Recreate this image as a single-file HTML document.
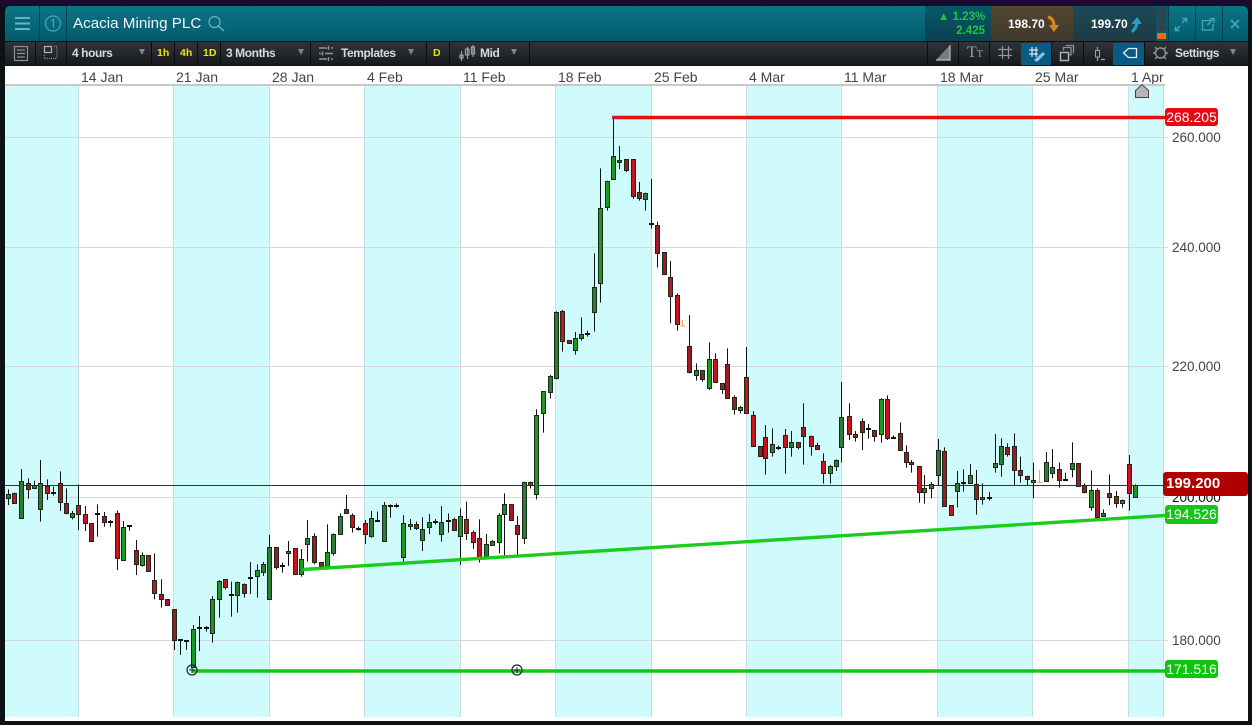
<!DOCTYPE html>
<html><head><meta charset="utf-8"><style>
*{box-sizing:border-box}
html,body{margin:0;padding:0;width:1252px;height:725px;overflow:hidden;background:#0d1216;font-family:"Liberation Sans",sans-serif}
.a{position:absolute}
#top{left:0;top:0;width:1252px;height:6px;background:#1c0a30}
#hdr{left:5px;top:6px;width:1243px;height:35px;background:linear-gradient(#0b7587,#045a6c);border-radius:5px 5px 0 0}
#tb{left:5px;top:42px;width:1243px;height:23px;background:linear-gradient(#30343a,#181a1e)}
.dv{position:absolute;width:1px;background:#0b0d10}
.hd{position:absolute;width:1px;top:6px;height:35px;background:#04414f}
.t{position:absolute;white-space:nowrap;color:#d5dade;font-weight:bold;font-size:12px;line-height:14px;letter-spacing:-.42px}
.y{position:absolute;white-space:nowrap;color:#e8e800;font-weight:bold;font-size:10.5px;line-height:12px}
.ar{position:absolute;width:0;height:0;border-left:3.5px solid transparent;border-right:3.5px solid transparent;border-top:6px solid #7f858b}
.dt{position:absolute;white-space:nowrap;color:#444;font-size:14px;line-height:14px;top:70px}
.pr{position:absolute;white-space:nowrap;color:#444;font-size:13.5px;line-height:16px;left:1172px}
.lb{position:absolute;left:1165px;width:53px;color:#fff;font-size:14px;line-height:18px;border-radius:3px;text-align:center}
</style></head><body>
<div class="a" id="top"></div>
<div class="a" style="left:5px;top:66px;width:1243px;height:655px;background:#fff"></div>
<div class="a" id="hdr"></div>
<div class="a" style="left:925px;top:6px;width:66px;height:35px;background:linear-gradient(#05586a,#0c4150)"></div>
<div class="a" style="left:991px;top:6px;width:82px;height:35px;background:linear-gradient(#54452f,#3f3a2e)"></div>
<div class="a" style="left:1073px;top:6px;width:83px;height:35px;background:linear-gradient(#1a4a58,#1f3a44)"></div>
<div class="a" style="left:1156px;top:6px;width:12px;height:35px;background:#0a5868"></div>
<div class="a" style="left:1157px;top:8px;width:9px;height:7px;background:#36414a"></div>
<div class="a" style="left:1157px;top:17px;width:9px;height:7px;background:#36414a"></div>
<div class="a" style="left:1157px;top:25px;width:9px;height:6px;background:#36414a"></div>
<div class="a" style="left:1157px;top:33px;width:9px;height:6px;background:#ee6a10"></div>
<div class="hd" style="left:39px"></div><div class="hd" style="left:66px"></div>
<div class="hd" style="left:1168px"></div><div class="hd" style="left:1195px"></div><div class="hd" style="left:1222px"></div>
<div class="t" style="left:73px;top:15px;font-size:15.2px;line-height:18px;font-weight:normal;color:#f2f6f7;letter-spacing:0">Acacia Mining PLC</div>
<div class="t" style="left:938px;top:10px;width:47px;text-align:right;color:#1ac83a;font-size:11.5px;letter-spacing:0">▲ 1.23%</div>
<div class="t" style="left:938px;top:23.5px;width:47px;text-align:right;color:#1ac83a;font-size:11.5px;letter-spacing:0">2.425</div>
<div class="t" style="left:1008px;top:17px;color:#fff;letter-spacing:0">198.70</div>
<div class="t" style="left:1091px;top:17px;color:#fff;letter-spacing:0">199.70</div>
<div class="a" id="tb"></div>
<div class="dv" style="left:35px;top:42px;height:23px"></div><div class="dv" style="left:66px;top:42px;height:23px"></div>
<div class="dv" style="left:151px;top:42px;height:23px"></div><div class="dv" style="left:174px;top:42px;height:23px"></div><div class="dv" style="left:197px;top:42px;height:23px"></div><div class="dv" style="left:220px;top:42px;height:23px"></div>
<div class="dv" style="left:310px;top:42px;height:23px"></div><div class="dv" style="left:426px;top:42px;height:23px"></div><div class="dv" style="left:449px;top:42px;height:23px"></div><div class="dv" style="left:529px;top:42px;height:23px"></div>
<div class="dv" style="left:927px;top:42px;height:23px"></div><div class="dv" style="left:958px;top:42px;height:23px"></div><div class="dv" style="left:989px;top:42px;height:23px"></div><div class="dv" style="left:1021px;top:42px;height:23px"></div><div class="dv" style="left:1051px;top:42px;height:23px"></div><div class="dv" style="left:1083px;top:42px;height:23px"></div><div class="dv" style="left:1113px;top:42px;height:23px"></div><div class="dv" style="left:1144px;top:42px;height:23px"></div>
<div class="a" style="left:1021px;top:43px;width:30px;height:22px;background:#0a5a86"></div>
<div class="a" style="left:1113px;top:43px;width:31px;height:22px;background:#0a5a86"></div>
<div class="t" style="left:72px;top:46px">4 hours</div><div class="ar" style="left:139px;top:49px"></div>
<div class="y" style="left:157px;top:47px">1h</div><div class="y" style="left:180px;top:47px">4h</div><div class="y" style="left:203px;top:47px">1D</div>
<div class="t" style="left:226px;top:46px">3 Months</div><div class="ar" style="left:298px;top:49px"></div>
<div class="t" style="left:341px;top:46px">Templates</div><div class="ar" style="left:408px;top:49px"></div>
<div class="y" style="left:433px;top:47px">D</div>
<div class="t" style="left:480px;top:46px">Mid</div><div class="ar" style="left:511px;top:49px"></div>
<div class="t" style="left:967px;top:45px;font-family:'Liberation Serif',serif;font-weight:normal;font-size:16px;line-height:16px;color:#9a9ea2;letter-spacing:0">T<span style="font-size:10px">T</span></div>
<div class="t" style="left:1175px;top:46px">Settings</div><div class="ar" style="left:1230px;top:49px"></div>
<div class="dt" style="left:81px">14 Jan</div><div class="dt" style="left:176px">21 Jan</div><div class="dt" style="left:272px">28 Jan</div><div class="dt" style="left:367px">4 Feb</div><div class="dt" style="left:463px">11 Feb</div><div class="dt" style="left:558px">18 Feb</div><div class="dt" style="left:654px">25 Feb</div><div class="dt" style="left:749px">4 Mar</div><div class="dt" style="left:844px">11 Mar</div><div class="dt" style="left:940px">18 Mar</div><div class="dt" style="left:1035px">25 Mar</div><div class="dt" style="left:1131px;width:33px;overflow:hidden">1 Apr</div>
<svg class="a" id="ch" style="left:0;top:0" width="1252" height="725" viewBox="0 0 1252 725">
<g id="bg"></g><g id="cs"></g>
<g fill="none" stroke-width="1.2">
<path d="M15 18h15M15 23.500h15M15 29h15" stroke="#5fb8c4" stroke-width="2"/>
<circle cx="53" cy="23.500" r="7.500" stroke="#4aa5b3"/><path d="M51.500 20.500l2-1.200v8.500" stroke="#4aa5b3"/>
<circle cx="214.500" cy="22" r="5.500" stroke="#5fb8c4"/><path d="M218.500 26l5.500 5" stroke="#5fb8c4" stroke-width="1.500"/>
<path d="M1175.500 30.500l4.500-4.500M1175.500 26.500v4h4M1186.500 18.500l-4.500 4.500M1182.500 18.500h4v4" stroke="#3fa6b6" stroke-width="1.500"/>
<path d="M1211 20.500h-8.500v9.500h10.500v-6M1207.500 25l6-6.500M1209.500 18.500h4.500v4.500" stroke="#4aa5b3" stroke-width="1.300"/>
<path d="M1231 20l8 8M1239 20l-8 8" stroke="#4aa5b3" stroke-width="1.600"/>
<rect x="14.500" y="46.500" width="13" height="14" stroke="#8b9096"/><path d="M17 50h8M17 53.500h8M17 57h8" stroke="#8b9096"/>
<rect x="44.500" y="46.500" width="7" height="6" stroke="#b0b5ba"/><path d="M44.500 55v3.500h12.500V47M54 46.500h3" stroke="#8b9096" stroke-dasharray="1 1"/>
<path d="M319 48h8M331 48h2M319 53.500h2M325 53.500h8M319 59h8M331 59h2M328.500 46v4M322.500 51.500v4M328.500 57v4" stroke="#8f949a" stroke-width="1.400"/>
<path d="M461.500 51v10M467.500 47v12M473 45v12" stroke="#9a9fa4"/><rect x="460" y="55" width="3" height="3" stroke="#9a9fa4"/><rect x="465.500" y="49" width="3.500" height="6" stroke="#9a9fa4"/><rect x="471.500" y="47" width="3" height="7" stroke="#9a9fa4"/>
<path d="M936 60h14V45z" fill="#777c82" stroke="none"/><path d="M950 45v15h-14" stroke="#b8bcc0"/>
<path d="M998 49.500h14M998 55.500h14M1002.500 46v13M1008.500 46v13" stroke="#8f9498"/>
<path d="M1029 50h9M1029 54h9M1032 47v10M1036 47v10" stroke="#dbe6ee"/><path d="M1034 60l9-8 2 2-8 8z" fill="#8cc6e6" stroke="none"/>
<rect x="1060.500" y="52.500" width="8" height="8" stroke="#aeb2b6" stroke-width="1.500"/><path d="M1063.500 50.500v-3h7.500v7.500h-1.500M1066.500 46v-.500h7v8" stroke="#8a8f94" stroke-width="1.300"/>
<path d="M1097.500 47v3M1097.500 57v4M1101 59.500h4" stroke="#9ca1a6"/><rect x="1095.500" y="50.500" width="4" height="6.500" stroke="#9ca1a6" stroke-width="1"/>
<path d="M1123.500 53l5-4.500h8v9h-8z" stroke="#e6eef3" stroke-width="1.300"/>
<circle cx="1160.500" cy="53" r="5" stroke="#8b9096" stroke-width="1.500"/><path d="M1155 47l2 2M1166 47l-2 2M1155 59l2-2M1166 59l-2-2M1153 53h2M1166 53h2" stroke="#8b9096" stroke-width="1.500"/>
<path d="M1048 17c4 1 6 4 6 9" stroke="#d98a1e" stroke-width="3"/><path d="M1049 25l5 7 5-7z" fill="#d98a1e" stroke="none"/>
<path d="M1132 32c3-3 5-7 5-10" stroke="#1fa5bd" stroke-width="3"/><path d="M1131.500 24l5.500-7 5 7z" fill="#1fa5bd" stroke="none"/>
</g>
<path d="M612 117.500H1165" stroke="#e01015" stroke-width="3.500"/>
<path d="M303 569.500L1165 515.500" stroke="#1ccc1c" stroke-width="3.400"/>
<path d="M192 671H1165" stroke="#12c912" stroke-width="3.400"/>
<circle cx="192" cy="670" r="5" fill="none" stroke="#223" stroke-width="1.200"/><path d="M189 670h6M192 667v6" stroke="#223"/>
<circle cx="517" cy="670" r="5" fill="none" stroke="#223" stroke-width="1.200"/><path d="M514 670h6M517 667v6" stroke="#223"/>
<path d="M1135.500 97.500v-7l6.500-6 6.500 6v7z" fill="#b5b5b5" stroke="#444"/>
</svg>
<div class="pr" style="top:130px">260.000</div><div class="pr" style="top:240px">240.000</div><div class="pr" style="top:359px">220.000</div><div class="pr" style="top:490px;color:#111">200.000</div><div class="pr" style="top:633px">180.000</div>
<div class="lb" style="top:108px;background:#e60a12">268.205</div>
<div class="lb" style="top:505px;background:#17c417;height:19px">194.526</div>
<div class="lb" style="top:660px;background:#0fc40f">171.516</div>
<div class="a" style="left:1163px;top:472px;width:85px;height:24px;background:#b00000;border-radius:3px;color:#fff;font-weight:bold;font-size:15px;line-height:24px;padding-left:3px">199.200</div>
<script>
var bg='',cs='';
[[5,78],[173,269],[364,460],[555,651],[746,841],[937,1032],[1128,1163]].forEach(function(b){bg+='<rect x="'+b[0]+'" y="85" width="'+(b[1]-b[0])+'" height="632" fill="#d0fbfd"/>';});
[78,173,269,364,460,555,651,746,841,937,1032,1128,1163].forEach(function(x){bg+='<path d="M'+(x+.5)+' 85V717" stroke="#c7dfe2"/>';});
[137.5,247.5,366.5,497.5,640.5].forEach(function(y){bg+='<path d="M5 '+y+'H1168" stroke="#d4dadb"/>';});
bg+='<path d="M5 85H1165" stroke="#c8c8c8" stroke-width="2"/><path d="M5 485.500H1165" stroke="#333"/>';
document.getElementById('bg').innerHTML=bg;
var col={g:'#1a9a1e',r:'#c8141e',d:'#9c1c26',e:'#2a7d32'};
function seg(ox,oy,l){l.forEach(function(c){
 var x=Math.round(ox+c[0]/3-.5)+.5,wt=oy+c[2]/3,bt=Math.round(oy+c[3]/3)+.5,bb=Math.round(oy+c[4]/3)+.5,wb=oy+c[5]/3,k=c[1];
 if(k=='o'){cs+='<path d="M'+x+' '+wt+'V'+wb+'M'+(x-2)+' '+wb+'h5" stroke="#e8a860" fill="none"/>';return;}
 cs+='<path d="M'+x+' '+wt+'V'+wb+'" stroke="#111"/>';
 if(k=='x'){cs+='<rect x="'+(x-2.5)+'" y="'+(bt-.5)+'" width="5" height="2" fill="#111"/>';return;}
 cs+='<rect x="'+(x-2)+'" y="'+bt+'" width="4" height="'+Math.max(bb-bt,2)+'" fill="'+col[k]+'" stroke="#1a2a1a"/>';
});}
seg(0,450,[[26,'e',118,133,143,165],[44,'r',128,130,158,162],[65,'e',57,92,205,205],[84,'d',85,100,116,146],[102,'e',92,104,115,115],[122,'e',30,100,178,215],[141,'r',88,108,128,150],[161,'x',110,125,127,137],[180,'d',64,100,157,183],[198,'d',115,160,190,193],[218,'e',183,188,200,208],[236,'r',103,166,193,240],[255,'r',168,193,220,243],[275,'d',220,220,274,274],[293,'x',163,190,193,260],[312,'d',186,198,215,230],[332,'x',210,212,214,230],[351,'r',182,190,325,360],[369,'g',213,232,329,332],[389,'x',226,226,229,242],[408,'d',270,300,341,375],[428,'g',307,316,344,350],[446,'r',316,316,364,364],[464,'r',310,391,428,448],[485,'d',388,433,448,473],[503,'d',448,448,466,466],[522,'d',478,478,569,600],[541,'x',568,568,575,615],[560,'x',570,571,574,600],[579,'g',525,538,650,655],[598,'x',498,532,536,603],[618,'x',528,532,535,545],[638,'g',438,448,550,578],[657,'g',390,394,448,503],[675,'r',388,388,410,418],[695,'x',395,432,436,500],[713,'e',395,397,436,488],[732,'d',400,403,430,443],[752,'x',336,382,385,432],[771,'g',343,361,377,443],[789,'e',336,343,365,378],[809,'e',255,292,448,448],[828,'d',292,292,350,359],[848,'x',338,345,349,368],[866,'e',273,304,310,348],[885,'r',295,295,371,371]]);
seg(300,470,[[5,'g',237,268,312,320],[23,'e',150,205,223,275],[42,'d',190,199,275,283],[63,'d',277,277,288,295],[81,'g',163,247,290,290],[99,'e',190,193,248,257],[120,'e',130,139,191,193],[138,'d',75,118,128,128],[158,'r',130,135,172,188],[176,'x',170,173,176,182],[195,'r',150,160,191,222],[215,'e',123,145,197,203],[233,'x',125,149,152,152],[252,'e',96,105,212,212],[272,'x',103,105,108,143],[290,'x',100,106,109,113],[309,'g',135,160,260,280],[330,'e',147,163,169,180],[348,'d',155,163,173,180],[368,'e',142,178,209,243],[387,'e',132,155,172,192],[405,'x',147,154,157,163],[425,'e',108,157,193,215],[444,'x',130,151,154,188],[462,'d',143,148,179,182],[482,'g',115,139,197,285],[500,'r',95,148,188,210],[519,'r',182,186,215,237],[539,'r',148,205,263,278],[558,'e',192,223,258,265],[578,'e',210,213,224,227],[597,'g',130,136,217,250],[614,'e',70,103,133,258],[635,'d',103,103,151,151],[653,'d',138,166,193,258],[672,'e',35,37,205,222],[692,'r',35,35,46,55]]);
seg(510,360,[[80,'g',148,165,403,418],[99,'g',93,93,160,218],[120,'e',45,48,97,115]]);
seg(500,110,[[168,'e',604,607,805,808],[188,'r',600,602,694,725],[207,'d',691,691,700,700],[225,'g',666,683,719,734],[245,'e',622,673,685,692],[263,'x',662,670,674,680],[282,'e',430,532,607,665],[302,'g',175,295,520,578],[321,'g',212,214,292,302],[339,'g',22,139,208,208],[359,'e',108,149,157,177],[378,'d',148,148,179,186],[399,'r',148,148,257,267],[417,'d',216,247,265,272],[435,'e',248,250,268,302],[455,'x',207,338,341,356],[473,'d',335,346,428,473],[492,'d',427,427,493,493],[512,'r',453,500,559,640],[531,'r',550,556,643,662],[548,'o',630,630,648,648],[569,'d',615,709,785,790],[588,'e',760,781,794,812],[606,'d',781,781,808,815],[627,'g',697,748,835,840],[645,'r',730,748,817,817]]);
seg(680,330,[[126,'d',160,160,176,192],[143,'d',55,103,203,205],[162,'d',196,202,238,254],[182,'e',228,232,239,250],[200,'r',51,142,248,248],[219,'r',243,256,349,349],[240,'d',349,349,377,380],[257,'r',285,322,385,434],[276,'e',295,343,367,380],[296,'x',347,351,355,360],[315,'r',297,316,352,431],[335,'e',303,337,352,380],[354,'d',337,337,352,358],[371,'d',220,292,317,404],[393,'r',317,319,347,377],[411,'d',338,345,358,358],[429,'r',370,394,428,461],[450,'g',405,408,428,461],[468,'e',388,391,409,423],[485,'e',156,262,352,398],[507,'r',220,259,313,330],[525,'d',303,313,320,335],[546,'d',265,274,307,360],[564,'x',282,295,298,326],[582,'d',300,301,319,335],[603,'g',205,208,311,338],[621,'r',196,208,323,330],[639,'x',316,321,325,326],[660,'d',277,310,361,361],[678,'d',346,365,397,413],[695,'d',390,397,403,428],[717,'r',409,409,487,518],[734,'e',435,475,487,521]]);
seg(930,420,[[5,'e',186,193,205,235],[24,'e',57,91,166,195],[42,'d',82,94,257,260],[63,'r',255,256,285,286],[81,'e',153,190,212,262],[99,'x',148,186,190,215],[120,'e',132,166,188,188],[138,'d',150,193,238,284],[156,'e',190,232,238,254],[177,'x',216,232,235,242],[195,'e',42,130,140,158],[215,'e',55,79,131,170],[233,'d',70,82,101,110],[252,'d',40,79,151,195],[272,'d',110,151,166,188],[291,'d',167,167,176,195],[309,'e',128,181,187,235],[328,'o',150,150,188,188],[348,'e',96,127,182,182],[366,'e',87,142,158,175],[387,'d',127,148,179,203],[405,'x',158,178,181,181],[426,'e',67,130,148,172],[444,'d',130,130,198,200],[462,'d',190,196,215,220],[483,'g',151,211,260,272],[501,'d',205,211,290,298],[519,'e',268,280,287,290],[539,'d',163,220,232,255],[558,'d',213,229,250,263],[576,'e',238,241,250,263],[597,'r',105,133,220,272],[615,'g',193,196,230,232]]);
document.getElementById('cs').innerHTML=cs;
</script>
</body></html>
